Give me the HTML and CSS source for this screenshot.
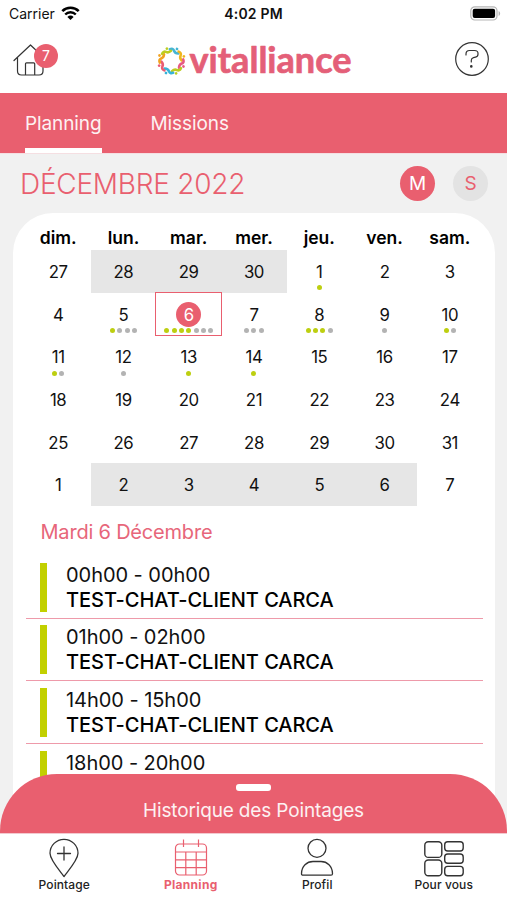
FILE: index.html
```html
<!DOCTYPE html>
<html lang="fr">
<head>
    <meta charset="UTF-8">
    <meta name="viewport" content="width=device-width, initial-scale=1.0">
    <title>Vitalliance - Planning</title>
    <link rel="stylesheet" href="styles.css">
</head>
<body>
    <div class="status-bar">
        <div class="carrier">
            <span>Carrier</span>
            <svg width="19" height="14" viewBox="0 0 19 14">
                <path d="M1.3 5.2a11.6 11.6 0 0 1 16.4 0" fill="none" stroke="#000" stroke-width="2.6"/>
                <path d="M4.2 8.5a7.5 7.5 0 0 1 10.6 0" fill="none" stroke="#000" stroke-width="2.4"/>
                <path d="M6.4 10.9a4.4 4.4 0 0 1 6.2 0L9.5 14z"/>
            </svg>
        </div>
        <span class="time">4:02 PM</span>
        <svg class="battery" width="31" height="15" viewBox="0 0 31 15">
            <rect x="0.8" y="0.8" width="26.2" height="13.2" rx="4" fill="#fff" stroke="#b5b5b5" stroke-width="1.2"/>
            <rect x="2.7" y="2.7" width="22.4" height="9.4" rx="2"/>
            <path d="M28.6 5v5c2-.8 2-4.2 0-5z" fill="#b5b5b5"/>
        </svg>
    </div>

    <header class="header">
        <div class="home">
            <svg width="34" height="34" viewBox="0 0 34 34" fill="none" stroke="#333" stroke-width="1.2" stroke-linecap="round" stroke-linejoin="round">
                <path d="M1 17.5 17.5 2 34 17.5M4.5 14.5V28q0 4 4 4H26q4 0 4-4V15M12.5 32V20.8q0-1 1-1h7.2q1 0 1 1V32"/>
            </svg>
            <span class="badge">7</span>
        </div>
        <svg class="logo" width="200" height="50" viewBox="0 -4 200 50">
            <defs>
                <g id="person">
                    <path d="M-4.6-10.9Q-1.8-12.9-.2-10.600T4.6-9" fill="none" stroke-width="2.6" stroke-linecap="round"/>
                    <circle cx="2.2" cy="-13" r="1.4" stroke="none"/>
                </g>
            </defs>
            <g transform="translate(15.5 21)">
                <use href="#person" stroke="#45b5d3" fill="#45b5d3" transform="rotate(15)"/>
                <use href="#person" stroke="#efb51e" fill="#efb51e" transform="rotate(60)"/>
                <use href="#person" stroke="#e75a82" fill="#e75a82" transform="rotate(105)"/>
                <use href="#person" stroke="#bccb20" fill="#bccb20" transform="rotate(150)"/>
                <use href="#person" stroke="#36b3d8" fill="#36b3d8" transform="rotate(195)"/>
                <use href="#person" stroke="#e95c72" fill="#e95c72" transform="rotate(240)"/>
                <use href="#person" stroke="#f1a221" fill="#f1a221" transform="rotate(285)"/>
                <use href="#person" stroke="#bdcd20" fill="#bdcd20" transform="rotate(330)"/>
            </g>
            <text class="logo-text" x="33.5" y="33" textLength="162" lengthAdjust="spacingAndGlyphs">vitalliance</text>
        </svg>
        <svg class="help" width="36" height="36" viewBox="0 0 36 36" fill="none" stroke="#333" stroke-width="1.2" stroke-linecap="round">
            <circle cx="18" cy="18" r="16.3"/>
            <path d="M12 14v-1q0-3.500 3.500-3.500h5q3.500 0 3.500 3v.8q0 2.200-2.500 2.800l-2 .5q-2.200.6-2.200 2.600V21"/>
            <circle cx="17.3" cy="25.4" r=".7" fill="#333"/>
        </svg>
    </header>

    <nav class="tabs">
        <a class="tab active">Planning</a>
        <a class="tab">Missions</a>
    </nav>

    <main class="content">
        <div class="month-bar">
            <h1 class="month">DÉCEMBRE 2022</h1>
            <button class="mode selected">M</button>
            <button class="mode">S</button>
        </div>

        <section class="card">
            <div class="weekdays">
                <span>dim.</span><span>lun.</span><span>mar.</span><span>mer.</span><span>jeu.</span><span>ven.</span><span>sam.</span>
            </div>
            <div class="calendar" id="calendar"></div>

            <h2 class="day-title">Mardi 6 Décembre</h2>
            <div class="missions">
                <div class="mission">
                    <span class="bar"></span>
                    <div><p class="hours">00h00 - 00h00</p><p class="client">TEST-CHAT-CLIENT CARCA</p></div>
                </div>
                <div class="mission">
                    <span class="bar"></span>
                    <div><p class="hours">01h00 - 02h00</p><p class="client">TEST-CHAT-CLIENT CARCA</p></div>
                </div>
                <div class="mission">
                    <span class="bar"></span>
                    <div><p class="hours">14h00 - 15h00</p><p class="client">TEST-CHAT-CLIENT CARCA</p></div>
                </div>
                <div class="mission">
                    <span class="bar"></span>
                    <div><p class="hours">18h00 - 20h00</p></div>
                </div>
            </div>
        </section>
    </main>

    <div class="history">
        <span class="handle"></span>
        <span class="history-label">Historique des Pointages</span>
    </div>

    <footer class="bottom-nav">
        <a class="nav-item">
            <svg width="42" height="40" viewBox="0 0 42 40" fill="none" stroke="#333" stroke-width="1.3" stroke-linecap="round" stroke-linejoin="round">
                <path d="M21 38.5C17 33 7 22 7 15.3a14 14 0 0 1 28 0C35 22 25 33 21 38.5zM21 9v13M14.5 15.5h13"/>
            </svg>
            <span>Pointage</span>
        </a>
        <a class="nav-item current">
            <svg width="42" height="40" viewBox="0 0 42 40" fill="none" stroke="#e95f6f" stroke-width="1.2">
                <rect x="5.5" y="6" width="31" height="31" rx="4"/>
                <path d="M5.5 14h31M5.5 21.8h31M5.5 29.6h31M15.8 14v23M26.2 14v23M13.5 1.5V9M28.5 1.5V9"/>
            </svg>
            <span>Planning</span>
        </a>
        <a class="nav-item">
            <svg width="42" height="40" viewBox="0 0 42 40" fill="none" stroke="#333" stroke-width="1.3">
                <circle cx="21" cy="10.3" r="9"/>
                <path d="M7 37.2q-1.5 0-1.5-1.5C5.5 28 11 23.5 17 23.5h8c6 0 11.5 4.5 11.5 12.2q0 1.5-1.5 1.5z"/>
            </svg>
            <span>Profil</span>
        </a>
        <a class="nav-item">
            <svg width="42" height="40" viewBox="0 0 42 40" fill="none" stroke="#333" stroke-width="1.4">
                <rect x="1.8" y="3.7" width="17" height="15.7" rx="3.5"/>
                <rect x="1.8" y="22" width="17" height="15.7" rx="3.5"/>
                <rect x="21.7" y="3.7" width="18.5" height="9.3" rx="3"/>
                <rect x="21.7" y="16" width="18.5" height="9.3" rx="3"/>
                <rect x="21.7" y="28.4" width="18.5" height="9.3" rx="3"/>
            </svg>
            <span>Pour vous</span>
        </a>
    </footer>

    <script src="script.js"></script>
</body>
</html>
```

FILE: styles.css
```css
* {
    box-sizing: border-box;
}

body {
    margin: 0;
    height: 900px;
    display: flex;
    flex-direction: column;
    overflow: hidden;
    font-family: Inter, "Liberation Sans", sans-serif;
    color: #111;
    background-color: #fff;
}

h1, h2, p {
    margin: 0;
    font-weight: 400;
}

/* Status bar */
.status-bar {
    height: 28px;
    flex: none;
    display: grid;
    grid-template-columns: 1fr auto 1fr;
    align-items: center;
    padding: 0 6px 0 9px;
    font-size: 14px;
}

.carrier {
    display: flex;
    align-items: center;
    gap: 6px;
}

.carrier span {
    margin-top: -1px;
}

.carrier svg {
    margin-top: -3px;
}

.time {
    font-weight: 600;
    font-size: 14px;
    letter-spacing: 0.2px;
    margin-top: -1px;
    margin-left: -3px;
}

.battery {
    justify-self: end;
    margin-top: -2px;
}

/* Header */
.header {
    height: 65px;
    flex: none;
    display: grid;
    grid-template-columns: 1fr auto 1fr;
    align-items: center;
    padding: 0 17px 3px 13px;
}

.home {
    display: flex;
    align-items: flex-start;
}

.home svg {
    margin-top: 1px;
}

.badge {
    width: 24px;
    height: 24px;
    margin-top: 2px;
    margin-left: -13px;
    border-radius: 50%;
    background-color: #e95f6f;
    color: #fff;
    font-size: 14px;
    line-height: 24px;
    text-align: center;
    z-index: 1;
}

.logo {
    margin-top: 3px;
    margin-left: 8px;
}

.logo-text {
    font-family: Lato, "Open Sans", sans-serif;
    font-size: 36px;
    font-weight: 700;
    fill: #e45f78;
    stroke: #e45f78;
    stroke-width: 0.7px;
    stroke-linejoin: round;
}

.help {
    justify-self: end;
}

/* Tabs */
.tabs {
    height: 61px;
    flex: none;
    display: flex;
    gap: 49px;
    padding: 0 25px;
    background-color: #e95f6f;
    border-bottom: 1px solid #f5dfe2;
}

.tab {
    color: #fdf1f2;
    font-size: 19px;
    line-height: 61px;
    letter-spacing: -0.1px;
}

.tab.active {
    border-bottom: 5px solid #fff;
}

/* Month and calendar */
.content {
    flex: 1;
    min-height: 0;
    overflow: hidden;
    padding: 0 12px 0 13px;
    background-color: #f1f1f1;
}

.month-bar {
    height: 59px;
    display: flex;
    align-items: center;
    padding: 0 7px 0 7px;
}

.month {
    flex: 1;
    font-size: 28px;
    font-weight: 350;
    letter-spacing: -0.25px;
    color: #e95f6f;
}

.mode {
    width: 35px;
    height: 35px;
    padding: 0;
    margin-left: 18px;
    border: none;
    border-radius: 50%;
    background-color: #e3e3e3;
    color: #e95f6f;
    font-family: inherit;
    font-size: 19px;
}

.mode.selected {
    background-color: #e95f6f;
    color: #fff;
}

.card {
    height: 700px;
    padding: 13px 12.5px 0;
    background-color: #fff;
    border-radius: 40px 40px 0 0;
}

.weekdays {
    height: 24px;
    display: grid;
    grid-template-columns: repeat(7, 1fr);
    line-height: 24px;
    text-align: center;
    font-size: 17.5px;
    font-weight: 600;
    color: #000;
}

.calendar {
    display: grid;
    grid-template-columns: repeat(7, 1fr);
    grid-auto-rows: 42.7px;
}

.day {
    display: flex;
    flex-direction: column;
    align-items: center;
    gap: 1.1px;
    padding-top: 8.9px;
    font-size: 16.8px;
    letter-spacing: -0.4px;
}

.day.off {
    background-color: #e6e6e6;
}

.number {
    width: 25.5px;
    height: 25.5px;
    line-height: 26.5px;
    text-align: center;
    border-radius: 50%;
}

.day.today {
    outline: 1px solid #e95f6f;
}

.day.today .number {
    background-color: #e95f6f;
    color: #fff;
}

.dots {
    display: flex;
    gap: 2.3px;
}

.dot {
    width: 5px;
    height: 5px;
    border-radius: 50%;
    background-color: #b3b3b3;
}

.dot.green {
    background-color: #bdcf10;
}

/* Missions of the day */
.day-title {
    padding: 12px 0 0 15px;
    font-size: 20px;
    line-height: 28px;
    letter-spacing: -0.2px;
    color: #e7667a;
}

.missions {
    padding-top: 9.9px;
}

.mission {
    height: 62.7px;
    display: flex;
    gap: 19px;
    padding: 6.5px 0 6px 14.5px;
    border-bottom: 1px solid #ee9aaa;
}

.bar {
    width: 7px;
    background-color: #c2d000;
}

.hours,
.client {
    font-size: 20px;
    line-height: 25px;
    letter-spacing: -0.05px;
    color: #111;
}

.client {
    font-weight: 500;
    color: #000;
}

/* Bottom panel and navigation */
.history {
    height: 59px;
    flex: none;
    display: flex;
    flex-direction: column;
    align-items: center;
    margin-top: -59px;
    padding-top: 10px;
    border-radius: 57px 57px 0 0;
    background-color: #e95f6f;
    z-index: 1;
}

.handle {
    width: 35px;
    height: 7px;
    border-radius: 3px;
    background-color: #fff;
}

.history-label {
    margin-top: 6px;
    font-size: 19px;
    line-height: 27px;
    letter-spacing: -0.15px;
    color: #fdf1f2;
}

.bottom-nav {
    height: 67px;
    flex: none;
    display: grid;
    grid-template-columns: repeat(4, 1fr);
    padding-left: 1px;
    border-top: 1px solid #f3c9cf;
}

.nav-item {
    display: flex;
    flex-direction: column;
    align-items: center;
    padding-top: 4px;
    font-size: 12px;
    line-height: 14px;
    letter-spacing: 0.1px;
    font-weight: 500;
    color: #222;
}

.nav-item.current {
    font-weight: 700;
    letter-spacing: 0.3px;
    color: #e95f6f;
}
```

FILE: script.js
```js
const days = [
    27, 28, 29, 30, 1, 2, 3,
    4, 5, 6, 7, 8, 9, 10,
    11, 12, 13, 14, 15, 16, 17,
    18, 19, 20, 21, 22, 23, 24,
    25, 26, 27, 28, 29, 30, 31,
    1, 2, 3, 4, 5, 6, 7
];

// Cells with a grey background
const off = [1, 2, 3, 36, 37, 38, 39, 40];
const today = 9;

// g = green dot, x = grey dot
const dots = {
    4: "g",
    8: "gxxx",
    9: "ggggxxx",
    10: "xxx",
    11: "gggx",
    12: "x",
    13: "gx",
    14: "gx",
    15: "x",
    16: "g",
    17: "g"
};

const calendar = document.getElementById("calendar");

for (let i = 0; i < days.length; i++) {
    let day = document.createElement("div");
    day.className = "day";
    if (off.includes(i)) {
        day.classList.add("off");
    }
    if (i == today) {
        day.classList.add("today");
    }

    let number = document.createElement("span");
    number.className = "number";
    number.innerText = days[i].toString();
    day.appendChild(number);

    let row = document.createElement("div");
    row.className = "dots";
    for (let type of dots[i] || "") {
        let dot = document.createElement("span");
        dot.className = type == "g" ? "dot green" : "dot";
        row.appendChild(dot);
    }
    day.appendChild(row);
    calendar.appendChild(day);
}
```
